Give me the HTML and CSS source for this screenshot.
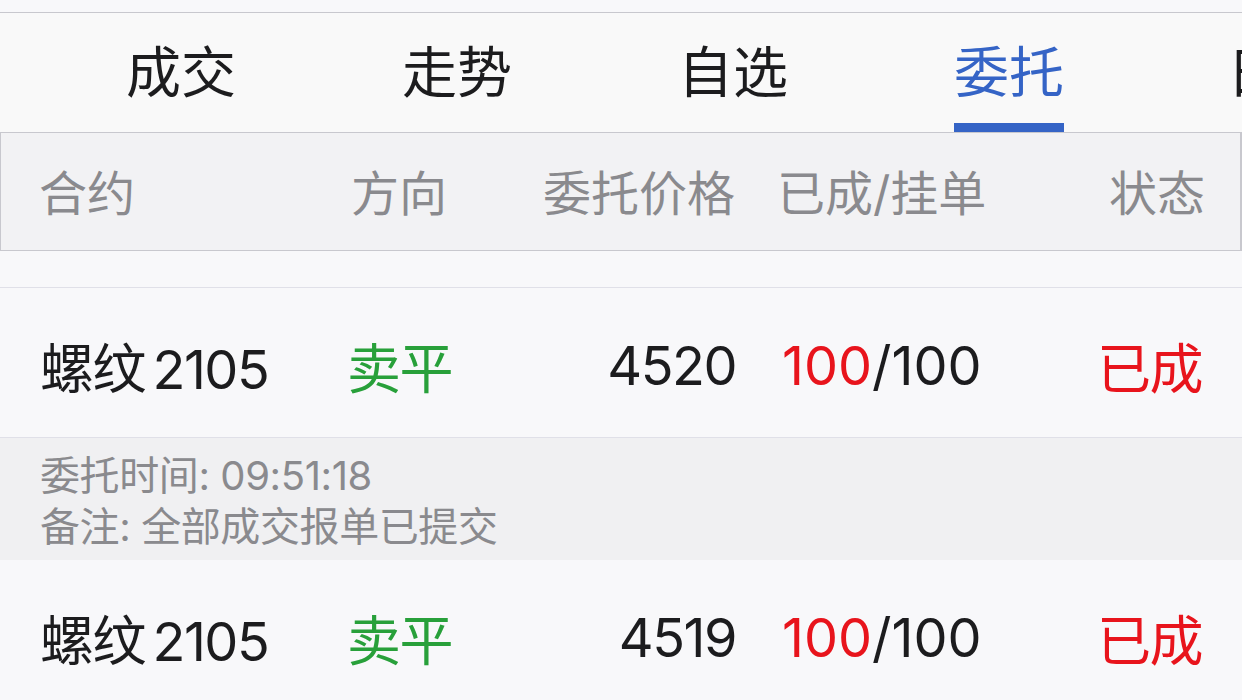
FILE: index.html
```html
<!DOCTYPE html>
<html lang="zh-CN">
<head>
  <meta charset="UTF-8">
  <title>委托</title>
  <link rel="stylesheet" href="styles.css">
</head>
<body>

  <div class="topbar"></div>

  <div class="tabs">
    <div class="tab">成交</div>
    <div class="tab">走势</div>
    <div class="tab">自选</div>
    <div class="tab active">委托</div>
    <div class="tab">日志</div>
  </div>

  <div class="table-head">
    <div class="col name">合约</div>
    <div class="col dir">方向</div>
    <div class="col price">委托价格</div>
    <div class="col qty">已成/挂单</div>
    <div class="col state">状态</div>
  </div>

  <div class="spacer"></div>

  <div class="order">
    <div class="col name">螺纹&#8198;2105</div>
    <div class="col dir sell">卖平</div>
    <div class="col price">4520</div>
    <div class="col qty"><span class="done">100</span>/100</div>
    <div class="col state done">已成</div>
  </div>
  <div class="detail">
    <div>委托时间: 09:51:18</div>
    <div>备注: 全部成交报单已提交</div>
  </div>

  <div class="order">
    <div class="col name">螺纹&#8198;2105</div>
    <div class="col dir sell">卖平</div>
    <div class="col price">4519</div>
    <div class="col qty"><span class="done">100</span>/100</div>
    <div class="col state done">已成</div>
  </div>

</body>
</html>
```

FILE: styles.css
```css
:root {
  --page-bg: #f8f8fa;
  --tab-bg: #f9f9f9;
  --head-bg: #f2f2f4;
  --detail-bg: #f0f0f2;
  --line: #c8c8ce;
  --soft-line: #e0e0e8;
  --text: #1c1c1e;
  --muted: #8a8a8e;
  --blue: #3564c6;
  --green: #28a03a;
  --red: #e8141c;
}

* {
  box-sizing: border-box;
}

body {
  margin: 0;
  background: var(--page-bg);
  color: var(--text);
  font-family: Inter, "Noto Sans CJK SC", sans-serif;
  overflow: hidden;
}

.topbar {
  height: 13px;
  border-bottom: 1px solid var(--line);
}

.tabs {
  display: flex;
  height: 119px;
  padding-left: 43px;
  background: var(--tab-bg);
  overflow: hidden;
}

.tab {
  flex: 0 0 276px;
  display: flex;
  justify-content: center;
  align-items: center;
  padding-bottom: 10px;
  font-size: 55px;
  position: relative;
}

.tab:last-child {
  justify-content: flex-start;
  padding-left: 80px;
}

.tab.active {
  color: var(--blue);
}

.tab.active::after {
  content: "";
  position: absolute;
  left: 83px;
  right: 83px;
  bottom: 0;
  height: 9px;
  background: var(--blue);
}

.table-head,
.order {
  display: grid;
  grid-template-columns: 307px 150px 239px 270px 1fr;
  align-items: center;
  padding: 0 40px;
  white-space: nowrap;
}

.table-head {
  height: 119px;
  background: var(--head-bg);
  border: 1.5px solid var(--line);
  border-right-width: 2px;
  color: var(--muted);
  font-size: 48px;
  padding: 0 35px 4px 38px;
}

.spacer {
  height: 37px;
  border-bottom: 1px solid var(--soft-line);
}

.order {
  height: 149px;
  font-size: 54px;
  letter-spacing: -1.5px;
  padding-top: 6px;
}

.order .col.qty {
  letter-spacing: 0;
}

.order + .detail {
  border-top: 1px solid var(--soft-line);
}

.col.price,
.col.state {
  text-align: right;
}

.col.qty {
  padding-left: 46px;
}

.table-head .col.qty {
  padding-left: 42px;
}

.table-head .col.dir {
  padding-left: 5px;
}

.sell {
  color: var(--green);
}

.done {
  color: var(--red);
}

.detail {
  background: var(--detail-bg);
  padding: 12px 40px 8px;
  color: var(--muted);
  font-size: 40px;
  letter-spacing: -0.4px;
  line-height: 51px;
}
```
